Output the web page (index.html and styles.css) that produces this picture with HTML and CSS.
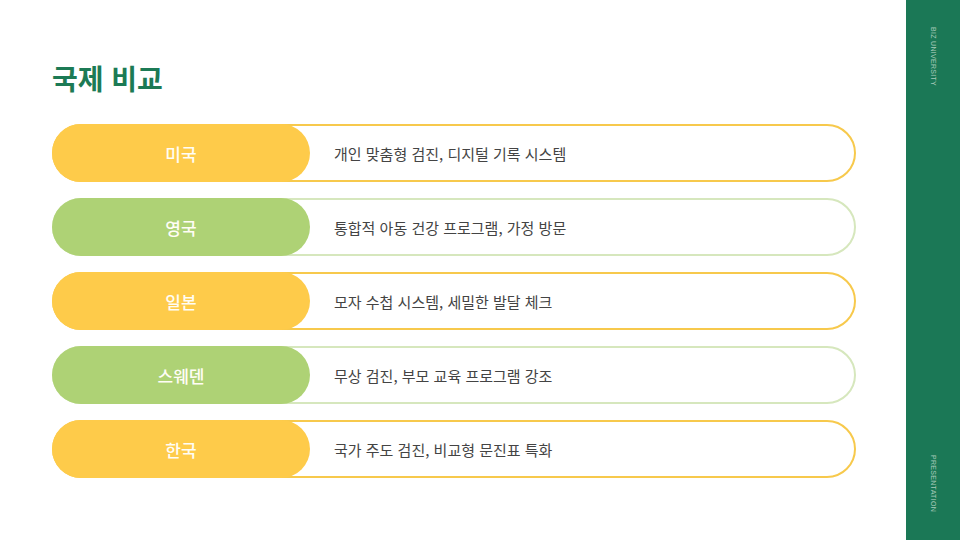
FILE: index.html
```html
<!DOCTYPE html>
<html lang="ko">
  <head>
    <meta charset="UTF-8">
    <meta name="viewport" content="width=device-width, initial-scale=1.0">
    <title>국제 비교</title>
    <link rel="stylesheet" href="styles.css">
  </head>
  <body>
    <div class="slide">
      <main class="content">
        <h1>국제 비교</h1>
        <ul class="rows">
          <li class="row yellow">
            <span class="tag">미국</span>
            <span class="desc">개인 맞춤형 검진, 디지털 기록 시스템</span>
          </li>
          <li class="row green">
            <span class="tag">영국</span>
            <span class="desc">통합적 아동 건강 프로그램, 가정 방문</span>
          </li>
          <li class="row yellow">
            <span class="tag">일본</span>
            <span class="desc">모자 수첩 시스템, 세밀한 발달 체크</span>
          </li>
          <li class="row green">
            <span class="tag">스웨덴</span>
            <span class="desc">무상 검진, 부모 교육 프로그램 강조</span>
          </li>
          <li class="row yellow">
            <span class="tag">한국</span>
            <span class="desc">국가 주도 검진, 비교형 문진표 특화</span>
          </li>
        </ul>
      </main>
      <aside class="side">
        <span class="side-text">BIZ UNIVERSITY</span>
        <span class="side-text">PRESENTATION</span>
      </aside>
    </div>
  </body>
</html>
```

FILE: styles.css
```css
* {
  box-sizing: border-box;
}

body {
  margin: 0;
  background-color: #fff;
  font-family: "Noto Sans CJK KR", "Noto Sans", sans-serif;
}

.slide {
  display: flex;
  width: 960px;
  height: 540px;
}

.content {
  flex: 1;
  padding: 58px 50px 0 52px;
}

h1 {
  margin: 0 0 26px 0;
  font-size: 28px;
  font-weight: 700;
  line-height: 40px;
  color: #1c7a55;
}

.rows {
  list-style: none;
  margin: 0;
  padding: 0;
  display: flex;
  flex-direction: column;
  gap: 16px;
}

.row {
  display: flex;
  align-items: center;
  height: 58px;
  border: 2px solid #f7c94c;
  border-radius: 29px;
}

.row.green {
  border-color: #d6e7bd;
}

.tag {
  display: flex;
  align-items: center;
  justify-content: center;
  width: 258px;
  height: 58px;
  margin: -2px 0 -2px -2px;
  border-radius: 29px;
  background-color: #fecb4a;
  color: #fffdf5;
  font-size: 17px;
  font-weight: 500;
}

.green .tag {
  background-color: #aed275;
}

.desc {
  padding-left: 24px;
  font-size: 15px;
  color: #444;
}

.side {
  width: 54px;
  background-color: #1b7856;
  display: flex;
  flex-direction: column;
  justify-content: space-between;
  align-items: center;
  padding: 27px 0 28px 0;
}

.side-text {
  writing-mode: vertical-rl;
  font-family: "Liberation Sans", sans-serif;
  font-size: 7px;
  letter-spacing: 0.3px;
  color: #a9cbbb;
}
```
